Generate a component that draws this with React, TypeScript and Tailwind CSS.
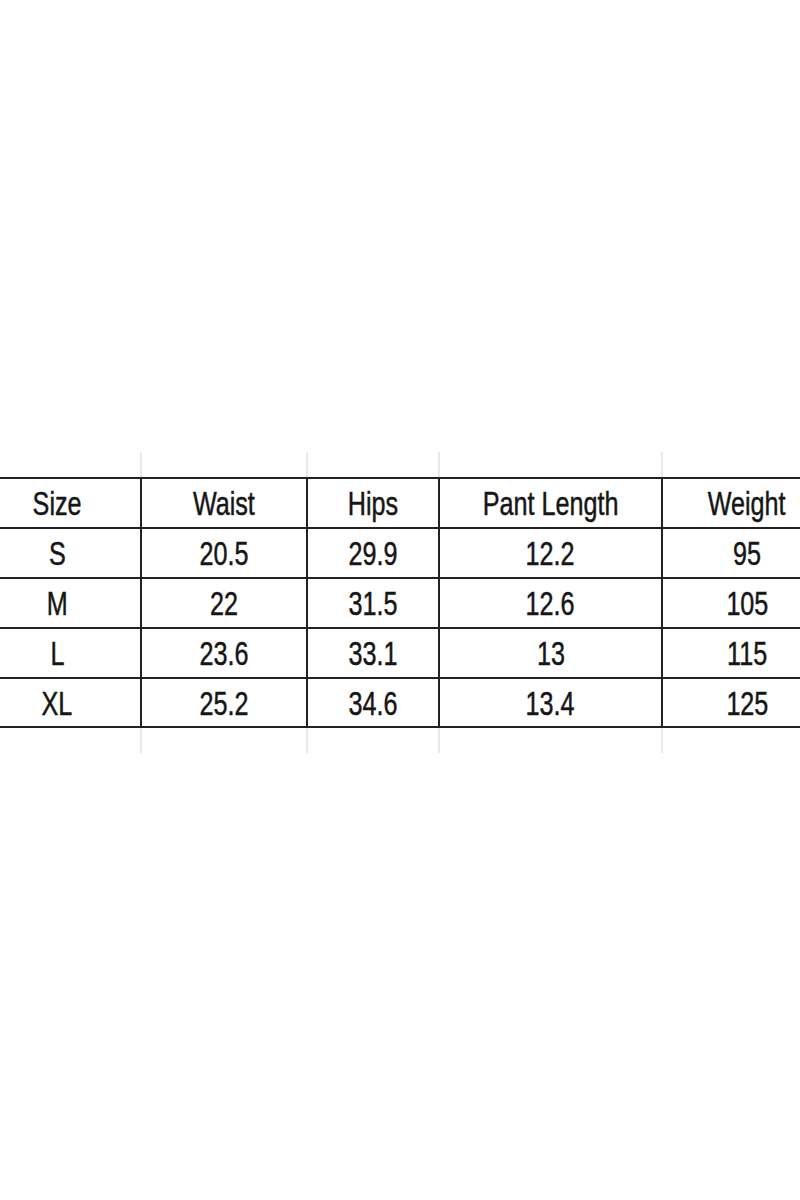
import React from "react";

const cols = ["w-[168px]", "w-[166px]", "w-[132px]", "w-[223px]", "w-[170px]"];

const rows: string[][] = [
  ["Size", "Waist", "Hips", "Pant Length", "Weight"],
  ["S", "20.5", "29.9", "12.2", "95"],
  ["M", "22", "31.5", "12.6", "105"],
  ["L", "23.6", "33.1", "13", "115"],
  ["XL", "25.2", "34.6", "13.4", "125"],
];

function GhostRow({ h }: { h: string }) {
  return (
    <div className={`flex ${h}`}>
      {cols.map((c, i) => (
        <div key={i} className={`${c} shrink-0 border-r-2 border-[#e8e8e8]`} />
      ))}
    </div>
  );
}

export default function App() {
  return (
    <div
      className="w-[800px] h-[1200px] overflow-hidden bg-white pt-[452px]"
      style={{ fontFamily: '"Liberation Sans", Arial, sans-serif' }}
    >
      <div className="ml-[-26px] w-[859px]">
        <GhostRow h="h-[25px]" />
        <div className="border-y-2 border-[#222222]">
          {rows.map((r, ri) => {
            const last = ri === rows.length - 1;
            return (
              <div
                key={ri}
                className={last ? "flex h-[47px]" : "flex h-[50px] border-b-2 border-[#222222]"}
              >
                {r.map((cell, ci) => (
                  <div
                    key={ci}
                    className={`${cols[ci]} shrink-0 border-r-2 border-[#222222] flex items-center justify-center`}
                  >
                    <span className="inline-block scale-x-[0.74] text-[34px] leading-none text-[#161616] whitespace-nowrap [-webkit-text-stroke:0.5px_#161616]">
                      {cell}
                    </span>
                  </div>
                ))}
              </div>
            );
          })}
        </div>
        <GhostRow h="h-[25px]" />
      </div>
    </div>
  );
}
